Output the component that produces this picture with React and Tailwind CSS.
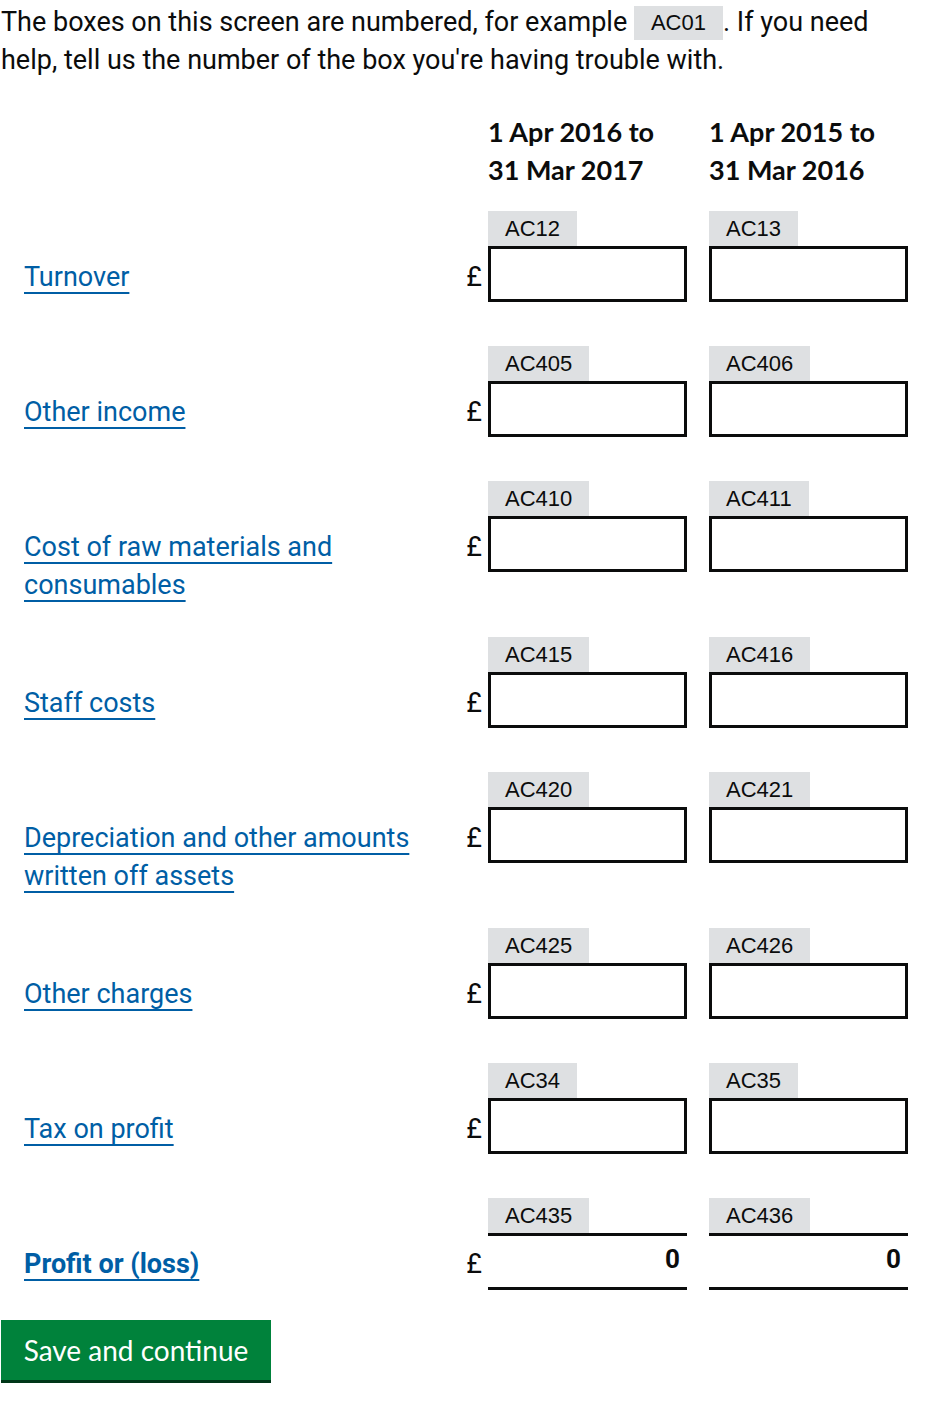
import React from "react";

const rows = [
  { label: "Turnover", a: "AC12", b: "AC13" },
  { label: "Other income", a: "AC405", b: "AC406" },
  { label: "Cost of raw materials and consumables", a: "AC410", b: "AC411", two: true },
  { label: "Staff costs", a: "AC415", b: "AC416" },
  { label: "Depreciation and other amounts written off assets", a: "AC420", b: "AC421", two: true },
  { label: "Other charges", a: "AC425", b: "AC426" },
  { label: "Tax on profit", a: "AC34", b: "AC35" },
];

function Tag({ children }) {
  return (
    <div className="self-start bg-[#dee0e2] h-[35px] px-[17px] flex items-center text-[22px] text-[#0b0c0c] font-['Liberation_Sans',sans-serif]">
      {children}
    </div>
  );
}

function Cell({ tag, total }) {
  return (
    <div className="w-[199px] flex flex-col">
      <Tag>{tag}</Tag>
      {total ? (
        <div className="h-[57px] border-t-[3px] border-b-[3px] border-[#0b0c0c] flex items-center justify-end pr-[7px] pb-[4px] text-[26px] font-bold">
          0
        </div>
      ) : (
        <input
          type="text"
          className="h-[56px] w-[199px] border-[3px] border-[#0b0c0c] bg-white outline-none"
        />
      )}
    </div>
  );
}

function Row({ label, a, b, two, total }) {
  return (
    <div className={`flex ${total ? "" : "mb-[44px]"}`}>
      <div className={`w-[440px] pl-[24px] pt-[47px] leading-[38px] text-[27px] ${two ? "mb-[-11px]" : ""}`}>
        <a
          href="#"
          className={`text-[#005ea5] underline decoration-[2px] underline-offset-[6px] ${total ? "font-bold" : ""} ${two ? "block w-[410px]" : ""}`}
        >
          {label}
        </a>
      </div>
      <div className="w-[48px] pt-[41px]">
        <div className="h-[50px] flex items-center justify-end pr-[6px] text-[27px]">£</div>
      </div>
      <div className="flex gap-[22px]">
        <Cell tag={a} total={total} />
        <Cell tag={b} total={total} />
      </div>
    </div>
  );
}

export default function App() {
  return (
    <div className="w-[948px] min-h-[1405px] bg-white text-[#0b0c0c] text-[26px] font-['Roboto',sans-serif]">
      <p className="pt-[3px] leading-[38px] pl-[1px] text-[27px]">
        The boxes on this screen are numbered, for example{" "}
        <span className="inline-block bg-[#dee0e2] px-[17px] leading-[34px] text-[22px] font-['Liberation_Sans',sans-serif] align-[1px]">
          AC01
        </span>
        . If you need
        <br />
        help, tell us the number of the box you're having trouble with.
      </p>

      <div className="flex gap-[22px] pl-[488px] mt-[34px] mb-[22px] font-bold leading-[38px] text-[27px] font-['Lato',sans-serif]">
        <div className="w-[199px]">1 Apr 2016 to<br />31 Mar 2017</div>
        <div className="w-[199px]">1 Apr 2015 to<br />31 Mar 2016</div>
      </div>

      {rows.map((r) => (
        <Row key={r.a} {...r} />
      ))}
      <Row label="Profit or (loss)" a="AC435" b="AC436" total />

      <div className="mt-[30px] pl-[1px]">
        <button className="bg-[#00823b] text-white text-[28px] h-[60px] w-[270px] shadow-[0_3px_0_#003618] font-['Lato',sans-serif]">
          Save and continue
        </button>
      </div>
    </div>
  );
}
